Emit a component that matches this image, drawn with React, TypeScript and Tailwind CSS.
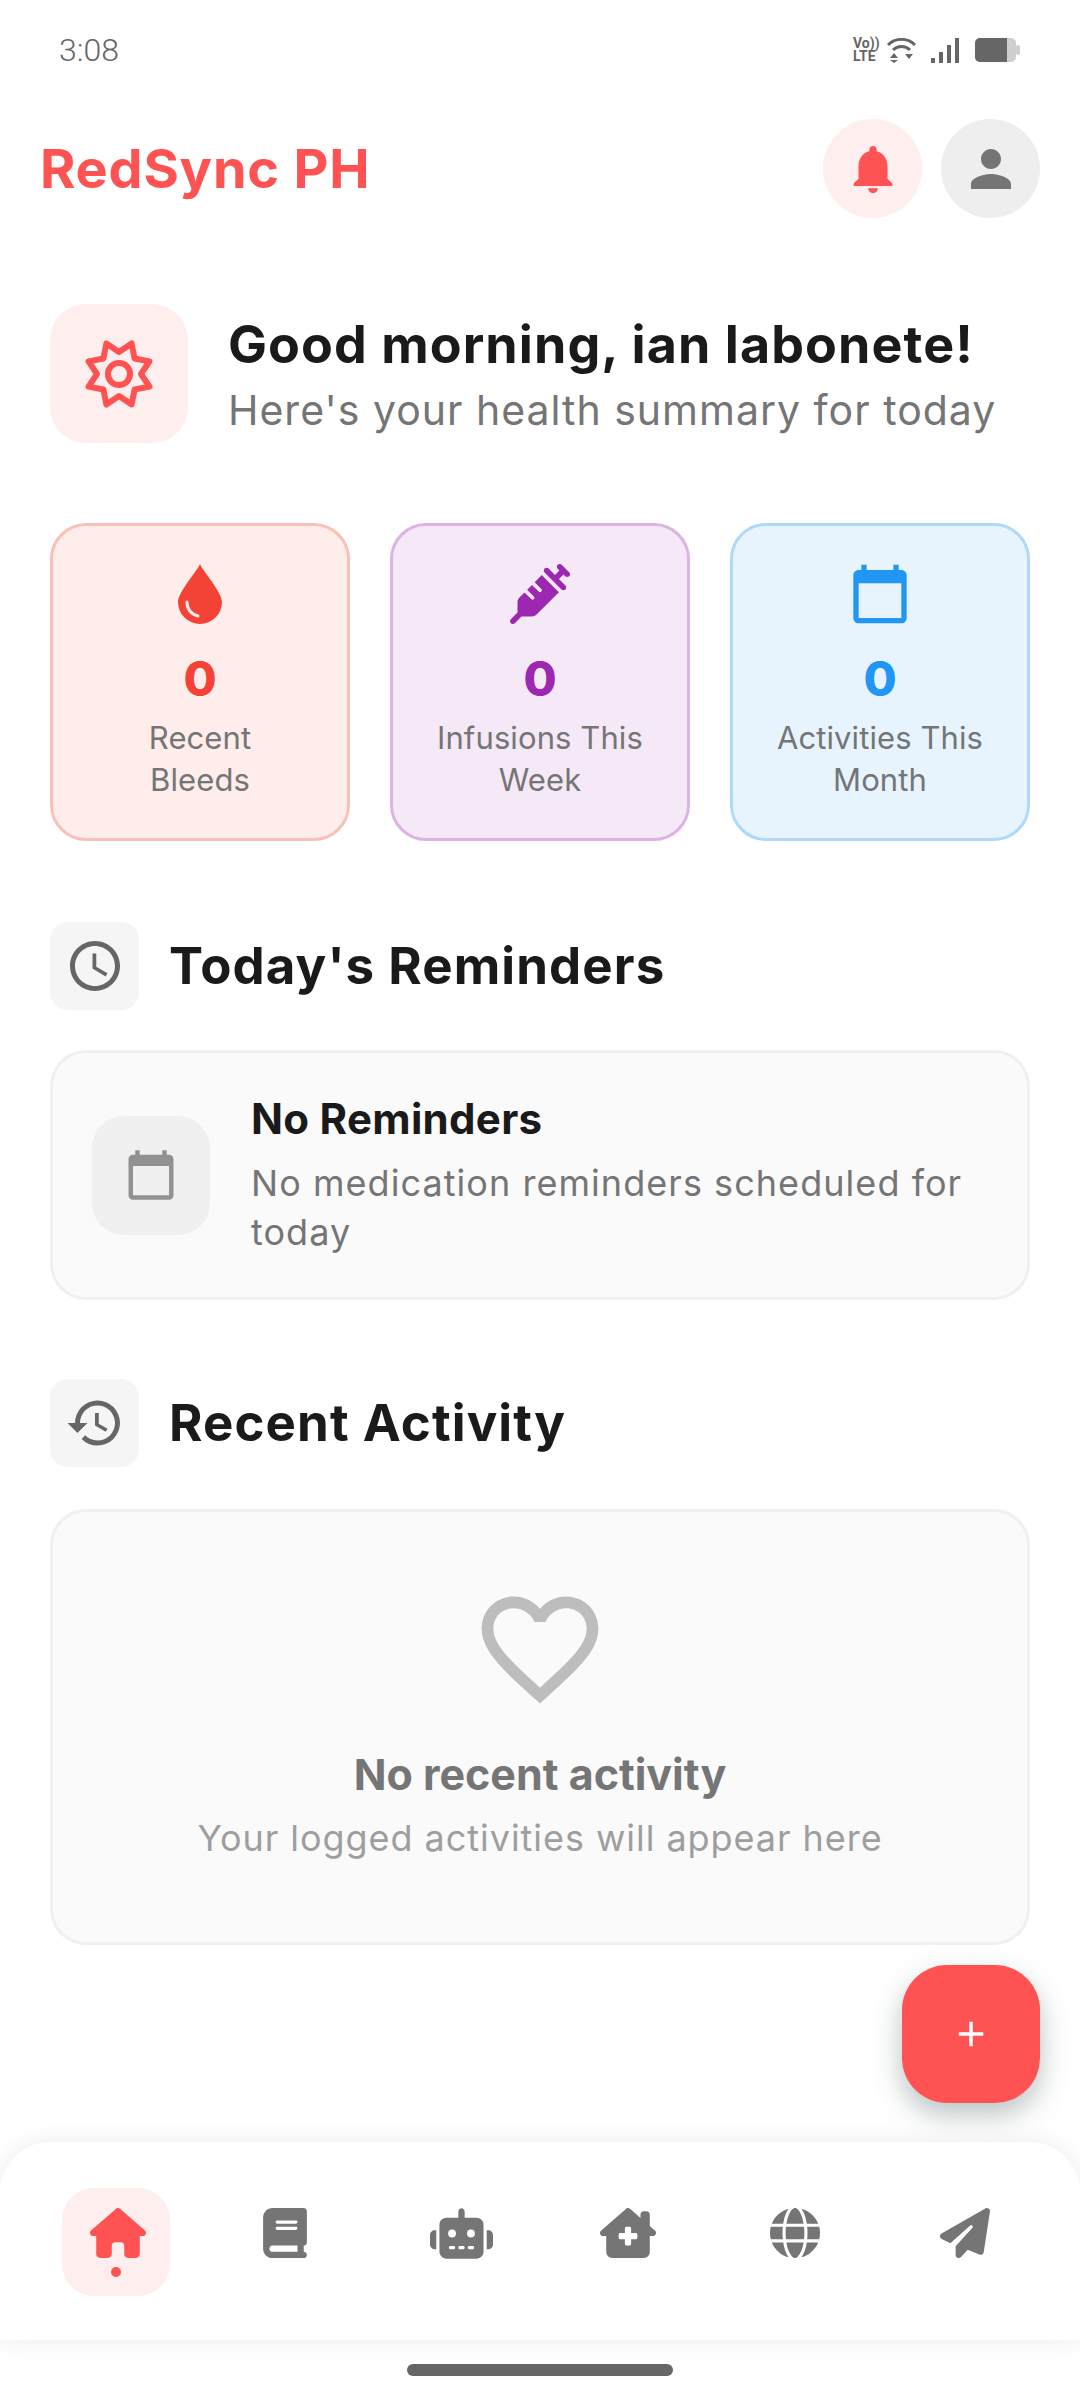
import { FaBook, FaGlobe, FaHouse, FaHouseChimneyMedical, FaPaperPlane, FaRobot, FaSyringe } from "react-icons/fa6";
import { MdAccessTime, MdAdd, MdCalendarToday, MdFavoriteBorder, MdHistory, MdNotifications, MdPerson } from "react-icons/md";

function BloodDrop() {
  return (
    <svg width="44" height="60" viewBox="0 0 44 60">
      <path d="M22 0 C24 6 44 28 44 38 A22 22 0 0 1 0 38 C0 28 20 6 22 0 Z" fill="currentColor" />
      <path d="M9 38 C9 45 13 50 20 52" fill="none" stroke="#feedeb" strokeWidth="3" strokeLinecap="round" />
    </svg>
  );
}

const stats = [
  { label: ["Recent", "Bleeds"], box: "bg-[#feedeb] border-[#f9c0b9]", tone: "text-[#f44336]", icon: <BloodDrop /> },
  { label: ["Infusions This", "Week"], box: "bg-[#f5e9f7] border-[#dcb4e4]", tone: "text-[#9c27b0]", icon: <FaSyringe size={60} /> },
  { label: ["Activities This", "Month"], box: "bg-[#e7f4fe] border-[#aed9fa]", tone: "text-[#2196f3]", icon: <MdCalendarToday size={64} /> },
];

const nav = [
  { w: "w-[168px]", icon: <FaHouse size={56} className="ml-[3px]" />, active: true },
  { w: "w-[170px]", icon: <FaBook size={50} /> },
  { w: "w-[182px]", icon: <FaRobot size={63} /> },
  { w: "w-[152px]", icon: <FaHouseChimneyMedical size={56} /> },
  { w: "w-[182px]", icon: <FaGlobe size={50} /> },
  { w: "w-[158px]", icon: <FaPaperPlane size={50} /> },
];

function StatusIcons() {
  return (
    <div className="flex items-center">
      <div className="flex flex-col items-start text-[#666] font-bold leading-[13px] text-[14px] w-[34px] font-['Roboto',sans-serif]">
        <span>Vo))</span>
        <span>LTE</span>
      </div>
      <svg width="29" height="25" viewBox="0 0 29 25" className="text-[#666]">
        <path d="M1 7 A19 19 0 0 1 28 7" fill="none" stroke="currentColor" strokeWidth="3" />
        <path d="M6 12 A12 12 0 0 1 23 12" fill="none" stroke="currentColor" strokeWidth="3" />
        <path d="M3 20 L7 15 L11 20 Z M3 22 H11 L7 25 Z M18 16 H26 L22 21 Z" fill="currentColor" />
      </svg>
      <svg width="28" height="25" viewBox="0 0 28 25" className="ml-[15px] text-[#666]">
        <path d="M0 20 H4 V25 H0 Z M8 14 H12 V25 H8 Z M16 7 H20 V25 H16 Z M24 0 H28 V25 H24 Z" fill="currentColor" />
      </svg>
      <svg width="45" height="24" viewBox="0 0 45 24" className="ml-[16px]">
        <rect x="0" y="0" width="41" height="24" rx="5" fill="#cfcfcf" />
        <rect x="41" y="7" width="4" height="10" rx="2" fill="#cfcfcf" />
        <path d="M5 0 H32 V24 H5 A5 5 0 0 1 0 19 V5 A5 5 0 0 1 5 0 Z" fill="#666" />
      </svg>
    </div>
  );
}

function SunStar() {
  // eight pointed outline with a ring in the middle
  const pts: string[] = [];
  for (let i = 0; i < 16; i++) {
    const r = i % 2 === 0 ? 22 : 33;
    const a = (i * 22.5 - 90) * (Math.PI / 180);
    pts.push(`${40 + r * Math.cos(a)},${40 + r * Math.sin(a)}`);
  }
  return (
    <svg width="80" height="80" viewBox="0 0 80 80" fill="none" stroke="#ff5252" strokeWidth="6" strokeLinejoin="round">
      <polygon points={pts.join(" ")} />
      <circle cx="40" cy="40" r="11" />
    </svg>
  );
}

function SectionHead({ icon, title }: { icon: React.ReactNode; title: string }) {
  return (
    <div className="flex items-center gap-[30px]">
      <div className="w-[89px] h-[88px] rounded-[18px] bg-[#f5f5f5] flex items-center justify-center text-[#666]">{icon}</div>
      <h2 className="text-[51px] font-bold text-[#1a1a1a] leading-none tracking-[1.1px] -mt-[2px]">{title}</h2>
    </div>
  );
}

export default function App() {
  return (
    <div className="relative w-[1080px] h-[2400px] bg-white flex flex-col overflow-hidden font-['Inter',sans-serif]">
      <div className="h-[100px] flex items-center justify-between pl-[59px] pr-[60px] shrink-0">
        <span className="text-[32px] font-light text-[#666] font-['Roboto',sans-serif]">3:08</span>
        <StatusIcons />
      </div>

      <header className="flex items-center justify-between pl-[40px] pr-[40px] pt-[19px]">
        <h1 className="text-[54px] font-bold text-[#ff5252] leading-none tracking-[0.8px]">RedSync PH</h1>
        <div className="flex gap-[19px]">
          <div className="w-[99px] h-[99px] rounded-full bg-[#ffeeee] flex items-center justify-center text-[#ff5252]"><MdNotifications size={58} /></div>
          <div className="w-[99px] h-[99px] rounded-full bg-[#eeeeee] flex items-center justify-center text-[#757575]"><MdPerson size={60} /></div>
        </div>
      </header>

      <main className="px-[50px] pt-[86px]">
        <section className="flex items-center gap-[40px]">
          <div className="w-[138px] h-[139px] rounded-[36px] bg-[#ffeeee] flex items-center justify-center shrink-0"><SunStar /></div>
          <div className="mt-[6px]">
            <p className="text-[52px] font-bold text-[#1a1a1a] leading-[62px] tracking-[1.07px]">Good morning, ian labonete!</p>
            <p className="text-[41px] text-[#757575] leading-[60px] tracking-[1px] mt-[4px]">Here's your health summary for today</p>
          </div>
        </section>

        <section className="grid grid-cols-3 gap-[40px] mt-[80px]">
          {stats.map((s) => (
            <div key={s.label[0]} className={`h-[318px] rounded-[36px] border-[3px] flex flex-col items-center pt-[32px] ${s.box}`}>
              <div className={`h-[72px] flex items-center justify-center ${s.tone}`}>{s.icon}</div>
              <div className={`text-[48px] font-extrabold leading-[60px] mt-[19px] ${s.tone}`}>0</div>
              <div className="text-[31px] text-[#757575] leading-[42px] mt-[8px] text-center tracking-[0.1px]">
                {s.label[0]}
                <br />
                {s.label[1]}
              </div>
            </div>
          ))}
        </section>

        <section className="mt-[81px]">
          <SectionHead icon={<MdAccessTime size={60} />} title="Today's Reminders" />
          <div className="mt-[40px] h-[250px] rounded-[36px] border-[3px] border-[#f0f0f0] bg-[#fafafa] flex items-center pl-[39px] pr-[40px] gap-[41px]">
            <div className="w-[118px] h-[119px] rounded-[32px] bg-[#f0f0f0] flex items-center justify-center text-[#919191] shrink-0"><MdCalendarToday size={54} /></div>
            <div>
              <p className="text-[42px] font-bold text-[#1a1a1a] leading-[50px] tracking-[0.3px]">No Reminders</p>
              <p className="text-[36px] text-[#757575] leading-[49px] mt-[15px] tracking-[1.05px]">No medication reminders scheduled for today</p>
            </div>
          </div>
        </section>

        <section className="mt-[79px]">
          <SectionHead icon={<MdHistory size={60} />} title="Recent Activity" />
          <div className="mt-[42px] h-[436px] rounded-[36px] border-[3px] border-[#f0f0f0] bg-[#fafafa] flex flex-col items-center pt-[87px]">
            <MdFavoriteBorder size={140} className="text-[#bdbdbd] -my-[20px]" />
            <p className="text-[43px] font-bold text-[#757575] leading-[50px] mt-[50px]">No recent activity</p>
            <p className="text-[36px] text-[#9e9e9e] leading-[50px] mt-[14px] tracking-[0.95px]">Your logged activities will appear here</p>
          </div>
        </section>
      </main>

      <button className="absolute right-[40px] top-[1965px] w-[138px] h-[138px] rounded-[45px] bg-[#ff5252] flex items-center justify-center text-white shadow-[0_12px_28px_rgba(60,80,80,0.35)]">
        <MdAdd size={42} />
      </button>

      <nav className="mt-auto h-[198px] mb-[60px] rounded-t-[50px] bg-white shadow-[0_0_24px_rgba(0,0,0,0.08)] flex items-start pl-[32px] pt-[46px] shrink-0">
        {nav.map((n, i) => (
          <div key={i} className={`${n.w} flex justify-center`}>
            <div className={`w-[108px] h-[108px] rounded-[32px] flex flex-col items-center pt-[20px] ${n.active ? "bg-[#ffeeee] text-[#ff5252]" : "text-[#757575]"}`}>
              <div className="h-[50px] flex items-center justify-center">{n.icon}</div>
              {n.active && <span className="w-[10px] h-[10px] rounded-full bg-[#ff5252] mt-[9px]" />}
            </div>
          </div>
        ))}
      </nav>

      <div className="absolute left-[407px] bottom-[24px] w-[266px] h-[12px] rounded-full bg-[#666]" />
    </div>
  );
}
